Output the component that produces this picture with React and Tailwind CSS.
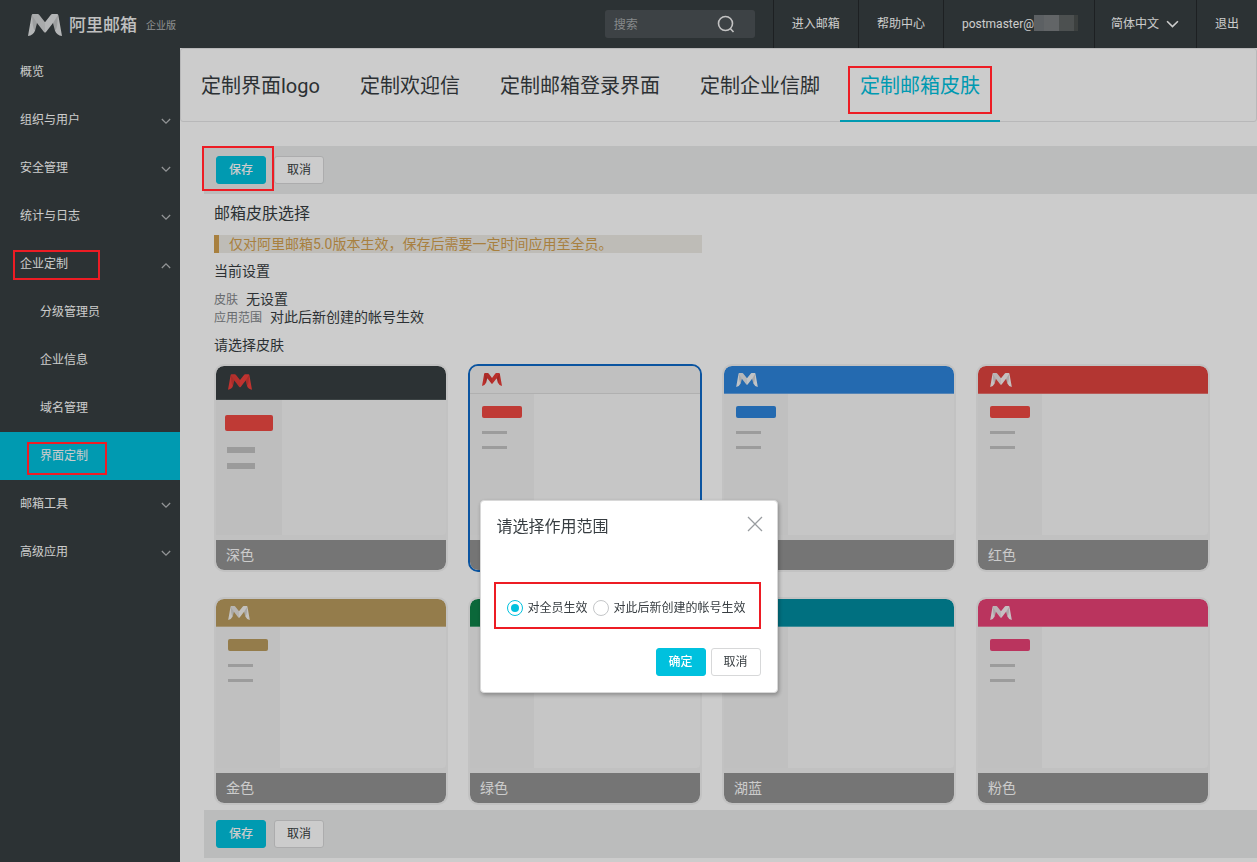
import { useState } from "react";

const navItems = [
  { label: "概览" },
  { label: "组织与用户", arrow: "down" },
  { label: "安全管理", arrow: "down" },
  { label: "统计与日志", arrow: "down" },
  { label: "企业定制", arrow: "up", mark: "left-[13px] top-[10px] h-[30px] w-[87px]" },
  { label: "分级管理员", child: true },
  { label: "企业信息", child: true },
  { label: "域名管理", child: true },
  { label: "界面定制", child: true, active: true, mark: "left-[27px] top-[10px] h-[33px] w-[80px]" },
  { label: "邮箱工具", arrow: "down" },
  { label: "高级应用", arrow: "down" },
];

const tabs = ["定制界面logo", "定制欢迎信", "定制邮箱登录界面", "定制企业信脚", "定制邮箱皮肤"];

const skins = [
  { name: "深色", large: true, header: "bg-[#383f41]", edge: "border-[#4c5456]", accent: "bg-[#ef4943]", logo: "text-[#f0403c]" },
  { name: "浅色", header: "bg-[#f1f1f1]", edge: "border-[#dcdcdc]", accent: "bg-[#ef4943]", logo: "text-[#e83c38]" },
  { name: "蓝色", header: "bg-[#2d85dc]", edge: "border-[#6aa6e4]", accent: "bg-[#2d85dc]", logo: "text-[#f0f4f8]" },
  { name: "红色", header: "bg-[#e0443f]", edge: "border-[#e6726e]", accent: "bg-[#ef4943]", logo: "text-[#f8f0f0]" },
  { name: "金色", header: "bg-[#b99b5e]", edge: "border-[#ccb78c]", accent: "bg-[#b99b5e]", logo: "text-[#f4f2ee]" },
  { name: "绿色", header: "bg-[#0e8249]", edge: "border-[#56a880]", accent: "bg-[#0e8249]", logo: "text-[#f0f6f2]" },
  { name: "湖蓝", header: "bg-[#008ca0]", edge: "border-[#4cafbd]", accent: "bg-[#008ca0]", logo: "text-[#f0f6f7]" },
  { name: "粉色", header: "bg-[#e94176]", edge: "border-[#ef7a9e]", accent: "bg-[#e94176]", logo: "text-[#f8eff3]" },
];

function Mark({ className }) {
  return <span aria-hidden="true" className={`pointer-events-none absolute z-20 border-2 border-[#ed1c24] ${className}`} />;
}

function Logo({ className }) {
  return (
    <svg viewBox="0 0 102 66" className={className} aria-hidden="true">
      <path
        fill="currentColor"
        d="M15 0H29Q32 0 34 3L51 25L68 3Q70 0 73 0H87Q90 0 91 4L102 66Q86 63 81 50L75 27L54 54Q51 57 48 54L27 27L21 50Q16 63 0 66L11 4Q12 0 15 0Z"
      />
      <path fill="#000" opacity="0.13" d="M12 3L27 27L21 50Q16 46 14 30Z" />
      <path fill="#000" opacity="0.13" d="M90 3L75 27L81 50Q86 46 88 30Z" />
      <path fill="#000" opacity="0.06" d="M51 25L34 3Q32 0 29 0H15L12 3L27 27L51 56Z" />
    </svg>
  );
}

function Chevron({ className, up }) {
  return (
    <svg viewBox="0 0 12 8" className={className} fill="none" stroke="currentColor" aria-hidden="true">
      <path d={up ? "M1 7L6 2L11 7" : "M1 1L6 6L11 1"} strokeWidth="1.5" />
    </svg>
  );
}

function Button({ primary, children, onClick }) {
  return (
    <button
      type="button"
      onClick={onClick}
      className={`h-7 w-[50px] rounded-[3px] border text-xs ${
        primary ? "border-[#00c1de] bg-[#00c1de] font-medium text-white" : "border-[#d7d8d9] bg-white text-[#373d41]"
      }`}
    >
      {children}
    </button>
  );
}

function ActionBar({ marked }) {
  return (
    <div className="relative flex h-12 items-center gap-2 bg-[#eaeceb] px-3">
      <Button primary>保存</Button>
      <Button>取消</Button>
      {marked && <Mark className="-left-0.5 top-0 h-[45px] w-[72px]" />}
    </div>
  );
}

function SkinCard({ skin, selected, onSelect }) {
  const big = skin.large;
  return (
    <button
      type="button"
      aria-pressed={selected}
      onClick={onSelect}
      className={`flex h-[208px] w-[234px] flex-col overflow-hidden rounded-[10px] border-2 bg-[#f2f2f2] text-left ${
        selected ? "border-[#0e6ac8]" : "border-[#f3f3f3]"
      }`}
    >
      <span
        className={`flex w-full shrink-0 rounded-t-lg border-b ${skin.header} ${skin.edge} ${
          big ? "h-[34px] px-3 pt-2" : "h-7 px-3 pt-[7px]"
        }`}
      >
        <Logo className={`${big ? "h-4 w-6" : selected ? "h-[13px] w-5" : "h-[14px] w-[22px]"} ${skin.logo}`} />
      </span>
      <span className={`mb-[5px] flex w-full flex-1 rounded-b-sm ${big ? "bg-[#f5f5f5]" : "bg-[#f8f8f8]"}`}>
        {big ? (
          <span className="flex w-[66px] flex-col items-start bg-[#eeeeee] pl-[9px] pt-[15px]">
            <span className={`mb-4 h-4 w-12 rounded-xs ${skin.accent}`} />
            <span className="mb-2.5 ml-0.5 h-[6px] w-7 bg-[#c2c2c2]" />
            <span className="ml-0.5 h-[6px] w-7 bg-[#c2c2c2]" />
          </span>
        ) : (
          <span className="flex w-16 flex-col items-start bg-[#f0f0f0] pl-3 pt-3">
            <span className={`mb-[13px] h-3 w-10 rounded-xs ${skin.accent}`} />
            <span className="mb-3 h-[3px] w-[25px] bg-[#c4c4c4]" />
            <span className="h-[3px] w-[25px] bg-[#c4c4c4]" />
          </span>
        )}
      </span>
      <span className="flex h-[30px] w-full shrink-0 items-center rounded-b-lg bg-[#939393] px-2.5 text-sm text-white">
        {skin.name}
      </span>
    </button>
  );
}

function Header() {
  return (
    <header className="flex h-12 items-stretch bg-[#383f41] text-xs text-white">
      <a href="#home" className="ml-7 flex items-center pt-0.5">
        <Logo className="mr-[7px] h-[22px] w-[34px] text-[#e2e4e5]" />
        <span className="text-[17px] font-medium text-[#f0f1f1]">阿里邮箱</span>
        <span className="ml-[9px] pt-0.5 text-[10px] text-[#b4b7b9]">企业版</span>
      </a>
      <div className="ml-auto mr-[18px] flex h-7 w-[150px] items-center self-center rounded-[3px] bg-[#4d5357] pl-[9px] pr-5">
        <input
          aria-label="搜索"
          placeholder="搜索"
          className="min-w-0 flex-1 bg-transparent pt-0.5 outline-none placeholder:text-[#a8acae]"
        />
        <svg viewBox="0 0 18 18" className="h-[18px] w-[18px]" fill="none" stroke="#f4f4f4" strokeWidth="1.6" aria-hidden="true">
          <circle cx="8.5" cy="8.5" r="7" />
          <path d="M13.2 13.5L16.5 17" />
        </svg>
      </div>
      <nav className="flex items-stretch">
        <a href="#mail" className="flex items-center border-l border-[#25292b] px-[18px]">进入邮箱</a>
        <a href="#help" className="flex items-center border-l border-[#25292b] px-[18px]">帮助中心</a>
        <a href="#account" className="flex items-center border-l border-[#25292b] pl-[18px] pr-4">
          <span>postmaster@</span>
          <span aria-hidden="true" className="mb-0.5 flex h-4">
            <span className="w-2.5 bg-[#74797c]" />
            <span className="w-[15px] bg-[#7b7f81]" />
            <span className="w-[15px] bg-[#5f6464]" />
            <span className="w-1 bg-[#4b504f]" />
          </span>
        </a>
        <button type="button" className="flex items-center gap-[7px] border-l border-[#25292b] pl-4 pr-[17px]">
          简体中文
          <Chevron className="h-[9px] w-[13px]" />
        </button>
        <a href="#logout" className="flex items-center border-l border-[#25292b] px-[18px]">退出</a>
      </nav>
    </header>
  );
}

function Sidebar() {
  return (
    <nav className="w-[180px] shrink-0 bg-[#383f41] text-xs text-white">
      {navItems.map((item) => (
        <a
          key={item.label}
          href="#nav"
          className={`relative flex h-12 items-center justify-between pr-[9px] ${item.child ? "pl-10" : "pl-5"} ${
            item.active ? "bg-[#00c1de]" : ""
          }`}
        >
          {item.label}
          {item.arrow && <Chevron up={item.arrow === "up"} className="mt-0.5 h-[7px] w-2.5 text-[#b8bbbd]" />}
          {item.mark && <Mark className={item.mark} />}
        </a>
      ))}
    </nav>
  );
}

function ScopeDialog({ onClose }) {
  const [scope, setScope] = useState("all");
  const options = [
    { value: "all", label: "对全员生效" },
    { value: "new", label: "对此后新创建的帐号生效" },
  ];
  return (
    <div className="fixed inset-0 z-10 flex items-start justify-center bg-black/20 pt-[500px]">
      <div
        role="dialog"
        aria-labelledby="scope-title"
        className="relative z-30 w-[298px] rounded-[4px] border border-[#d8d8d8] bg-white px-4 pb-4 shadow-[1px_2px_4px_rgba(0,0,0,0.3)]"
      >
        <div className="flex h-12 items-center justify-between">
          <h2 id="scope-title" className="pt-1 text-base text-[#373d41]">请选择作用范围</h2>
          <button type="button" aria-label="关闭" onClick={onClose} className="-mr-0.5 pb-0.5">
            <svg viewBox="0 0 16 16" className="h-4 w-4" fill="none" stroke="#999da0" strokeWidth="1.3">
              <path d="M1 1L15 15M15 1L1 15" />
            </svg>
          </button>
        </div>
        <fieldset className="-ml-[3px] mt-[33px] flex h-[47px] items-center gap-[5px] border-2 border-[#ed1c24] pl-[11px] pt-1 text-xs text-[#373d41]">
          {options.map((option) => (
            <label key={option.value} className="flex items-center gap-[5px] whitespace-nowrap">
              <input
                type="radio"
                name="scope"
                checked={scope === option.value}
                onChange={() => setScope(option.value)}
                className="h-4 w-4 appearance-none rounded-full border border-[#c4c6c8] bg-clip-content p-[3px] checked:border-[#00c1de] checked:bg-[#00c1de]"
              />
              {option.label}
            </label>
          ))}
        </fieldset>
        <div className="mt-[19px] flex justify-end gap-[5px]">
          <Button primary onClick={onClose}>确定</Button>
          <Button onClick={onClose}>取消</Button>
        </div>
      </div>
    </div>
  );
}

export default function App() {
  const [selected, setSelected] = useState("浅色");
  const [open, setOpen] = useState(true);
  return (
    <div className="flex min-h-screen flex-col bg-white font-[Roboto,'Noto_Sans_CJK_SC',sans-serif] text-[#373d41]">
      <Header />
      <div className="flex flex-1">
        <Sidebar />
        <main className="min-w-0 flex-1">
          <div className="flex h-[74px] rounded-[3px] border border-[#e6e7e8]">
            {tabs.map((tab, i) => {
              const active = i === tabs.length - 1;
              return (
                <a
                  key={tab}
                  href="#tab"
                  className={`relative -mb-px flex items-center whitespace-nowrap border-b-2 px-5 pt-0.5 text-xl ${
                    active ? "border-[#00c1de] text-[#00c1de]" : "border-transparent"
                  }`}
                >
                  {tab}
                  {active && <Mark className="left-2 top-[17px] h-12 w-36" />}
                </a>
              );
            })}
          </div>
          <div className="pb-1 pl-6 pt-6">
            <ActionBar marked />
            <section className="px-2.5 pb-[5px] pt-2 text-sm leading-[18px]">
              <h1 className="text-base leading-6">邮箱皮肤选择</h1>
              <p className="mt-[9px] w-[488px] border-l-[5px] border-[#d3a04f] bg-[#eeece5] pl-2.5 text-[#d3a04f]">
                仅对阿里邮箱5.0版本生效，保存后需要一定时间应用至全员。
              </p>
              <h2 className="mt-[9px]">当前设置</h2>
              <dl className="mt-2.5">
                <div className="flex h-[18px] items-baseline gap-2">
                  <dt className="text-xs leading-[18px] text-[#82868a]">皮肤</dt>
                  <dd>无设置</dd>
                </div>
                <div className="flex h-[18px] items-baseline gap-2">
                  <dt className="text-xs leading-[18px] text-[#82868a]">应用范围</dt>
                  <dd>对此后新创建的帐号生效</dd>
                </div>
              </dl>
              <h2 className="mt-2.5">请选择皮肤</h2>
              <div className="mt-2.5 flex flex-wrap gap-x-5 gap-y-[25px]">
                {skins.map((skin) => (
                  <SkinCard
                    key={skin.name}
                    skin={skin}
                    selected={selected === skin.name}
                    onSelect={() => setSelected(skin.name)}
                  />
                ))}
              </div>
            </section>
            <ActionBar />
          </div>
        </main>
      </div>
      {open && <ScopeDialog onClose={() => setOpen(false)} />}
    </div>
  );
}
